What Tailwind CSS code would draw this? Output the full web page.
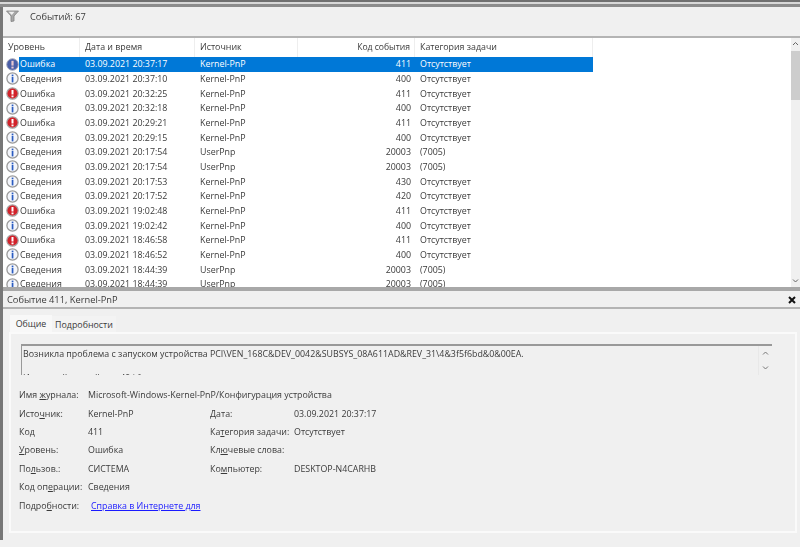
<!DOCTYPE html>
<html lang="en">
<head>
  <meta charset="UTF-8">
  <title>Просмотр событий</title>
  <script src="https://cdn.jsdelivr.net/npm/@tailwindcss/browser@4"></script>
</head>
<body class="w-[800px] h-[547px] overflow-hidden bg-[#f0f0f0] text-[8.85px] text-[#3a3a3a] font-['Open_Sans',sans-serif]">
<div class="blur-[0.35px]">

  <div class="h-[7px] border-t-2 border-b-[3px] border-t-[#707070] border-b-[#8c8c8c] bg-[#d8d8d8]"></div>

  <div class="flex flex-col h-[533px] border-l-[3px] border-[#777]">
    <!-- toolbar -->
    <div class="h-[31px] shrink-0 flex items-start gap-[11px] pl-[3px] pt-[3px] border-b-2 border-[#b4b4b4]">
      <svg class="w-[13px] h-[12px]" viewBox="0 0 13 12"><path d="M.5 1h12L8 6v5L5 11.500V6z" fill="#a8a8a8" stroke="#808080" stroke-width=".8"/><path d="M2.500 1.800h6L5.800 5z" fill="#f0f0f0"/></svg>
      <span class="text-[9.300px] leading-[14px]">Событий: 67</span>
    </div>

    <!-- list -->
    <div class="h-[253px] shrink-0 flex bg-white border-b-[4px] border-[#a8a8a8] overflow-hidden">
      <div class="w-[788px] overflow-hidden">
        <div class="h-[19px] grid grid-cols-[77px_115px_103px_117px_178px] items-center">
          <div class="pl-[5px] border-r border-[#eee] leading-[19px]">Уровень</div>
          <div class="pl-[5px] border-r border-[#eee] leading-[19px]">Дата и время</div>
          <div class="pl-[5px] border-r border-[#eee] leading-[19px]">Источник</div>
          <div class="pr-[4px] text-right border-r border-[#eee] leading-[19px] text-[8.600px]">Код события</div>
          <div class="pl-[5px] border-r border-[#eee] leading-[19px]">Категория задачи</div>
        </div>
        <div id="rows"></div>
      </div>
      <div class="w-[9px] ml-auto bg-[#f0f0f0] flex flex-col items-center">
        <svg class="w-[7px] h-[13px] shrink-0" viewBox="0 0 7 13"><path d="M1 7l2.500-2.500L6 7" fill="none" stroke="#666" stroke-width="1"/></svg>
        <div class="w-full h-[49px] bg-[#cdcdcd]"></div>
        <svg class="w-[7px] h-[10px] mt-auto mb-[1px] shrink-0" viewBox="0 0 7 10"><path d="M1 3.500L3.500 6 6 3.500" fill="none" stroke="#666" stroke-width="1"/></svg>
      </div>
    </div>

    <!-- details header -->
    <div class="h-[18px] shrink-0 flex items-center justify-between pl-[4px] pr-[4px] pt-[1px] border-b-2 border-[#b4b4b4] text-[9.300px]">
      <span>Событие 411, Kernel-PnP</span>
      <svg class="w-[8px] h-[8px]" viewBox="0 0 8 8"><path d="M1 1l6 6M7 1L1 7" stroke="#111" stroke-width="2"/></svg>
    </div>

    <!-- tabs -->
    <div class="flex pl-[7px] pt-[6px] h-[23px] shrink-0">
      <div class="w-[42px] bg-[#f8f8f8] text-center leading-[18px]">Общие</div>
      <div class="w-[64px] h-[16px] mt-[1px] bg-[#f3f3f3] text-center leading-[19px]">Подробности</div>
    </div>

    <div class="w-[788px] h-[201px] ml-[6px] border-2 border-[#fafafa] pt-[10px] pl-[8px]">
      <div class="w-[751px] h-[31px] ml-[2px] flex border-t-2 border-l border-[#999] overflow-hidden">
        <div class="flex-1 pl-[1px] pt-[1px] leading-[14px] overflow-hidden">
          <p class="h-[24px] leading-[14px]">Возникла проблема с запуском устройства PCI\VEN_168C&amp;DEV_0042&amp;SUBSYS_08A611AD&amp;REV_31\4&amp;3f5f6bd&amp;0&amp;00EA.</p>
          <p>Имеющийся драйвер: 49 і f</p>
        </div>
        <div class="w-[14px] flex flex-col items-center justify-around border-l border-[#e8e8e8]">
          <svg class="w-[7px] h-[7px]" viewBox="0 0 7 7"><path d="M1 4.500L3.500 2 6 4.500" fill="none" stroke="#777"/></svg>
          <svg class="w-[7px] h-[7px]" viewBox="0 0 7 7"><path d="M1 2.500L3.500 5 6 2.500" fill="none" stroke="#777"/></svg>
        </div>
      </div>

      <div class="grid grid-cols-[69px_122px_84px_1fr] auto-rows-[18.400px] items-center mt-[11px] leading-[14px]">
        <div>Имя <u>ж</u>урнала:</div><div class="col-span-3">Microsoft-Windows-Kernel-PnP/Конфигурация устройства</div>
        <div>Исто<u>ч</u>ник:</div><div>Kernel-PnP</div><div><u>Д</u>ата:</div><div>03.09.2021 20:37:17</div>
        <div>Код</div><div>411</div><div>Ка<u>т</u>егория задачи:</div><div>Отсутствует</div>
        <div><u>У</u>ровень:</div><div>Ошибка</div><div>Кл<u>ю</u>чевые слова:</div><div></div>
        <div>По<u>л</u>ьзов.:</div><div>СИСТЕМА</div><div>Ко<u>м</u>пьютер:</div><div>DESKTOP-N4CARHB</div>
        <div>Код оп<u>е</u>рации:</div><div class="col-span-3">Сведения</div>
        <div>Подро<u>б</u>ности:</div><div class="col-span-3 pl-[3px]"><a class="text-[#1a1aff] underline pr-[1px]">Справка в Интернете для</a></div>
      </div>
    </div>
  </div>
</div>

  <script>
    const K = 'Kernel-PnP', U = 'UserPnp', N = 'Отсутствует';
    const rows = [
      ['e','20:37:17',K,411,N],['i','20:37:10',K,400,N],['e','20:32:25',K,411,N],['i','20:32:18',K,400,N],
      ['e','20:29:21',K,411,N],['i','20:29:15',K,400,N],['i','20:17:54',U,20003,'(7005)'],['i','20:17:54',U,20003,'(7005)'],
      ['i','20:17:53',K,430,N],['i','20:17:52',K,420,N],['e','19:02:48',K,411,N],['i','19:02:42',K,400,N],
      ['e','18:46:58',K,411,N],['i','18:46:52',K,400,N],['i','18:44:39',U,20003,'(7005)'],['i','18:44:39',U,20003,'(7005)']
    ];
    const errIcon = `<svg class="w-[13px] h-[13px] shrink-0" viewBox="0 0 13 13"><circle cx="6.500" cy="6.500" r="5.700" fill="#d3222a" stroke="#a8a8a8" stroke-width="1.200"/><rect x="5.500" y="3" width="2" height="4.500" fill="#fff"/><rect x="5.500" y="8.500" width="2" height="1.800" fill="#fff"/></svg>`;
    const infoIcon = `<svg class="w-[13px] h-[13px] shrink-0" viewBox="0 0 13 13"><circle cx="6.500" cy="6.500" r="5.600" fill="#f4f6fb" stroke="#9a9a9a" stroke-width="1.300"/><rect x="5.700" y="2.600" width="1.700" height="1.700" fill="#2a5bc0"/><rect x="5.700" y="5" width="1.700" height="5.400" fill="#2a5bc0"/></svg>`;
    const selIcon = `<svg class="w-[13px] h-[13px] shrink-0" viewBox="0 0 13 13"><circle cx="6.500" cy="6.500" r="5.800" fill="#4a5fa8" stroke="#a8aabc"/><rect x="5.400" y="2.800" width="2.200" height="4.800" fill="#e8c8d0"/><rect x="5.400" y="8.600" width="2.200" height="1.900" fill="#e8c8d0"/></svg>`;
    document.getElementById('rows').innerHTML = rows.map((r, i) => {
      const sel = i === 0;
      const icon = sel ? selIcon : r[0] === 'e' ? errIcon : infoIcon;
      const bg = sel ? 'bg-[#0078d7] text-white' : '';
      return `<div class="flex h-[14.67px] items-center w-[590px]">
        <div class="w-[16px] pl-[3px] flex">${icon}</div>
        <div class="flex flex-1 h-full items-center leading-[14px] ${bg}">
          <div class="w-[61px] pl-[1px]">${r[0] === 'e' ? 'Ошибка' : 'Сведения'}</div>
          <div class="w-[115px] pl-[5px]">03.09.2021 ${r[1]}</div>
          <div class="w-[103px] pl-[5px]">${r[2]}</div>
          <div class="w-[117px] pr-[4px] text-right">${r[3]}</div>
          <div class="pl-[5px]">${r[4]}</div>
        </div>
      </div>`;
    }).join('');
  </script>
</body>
</html>
